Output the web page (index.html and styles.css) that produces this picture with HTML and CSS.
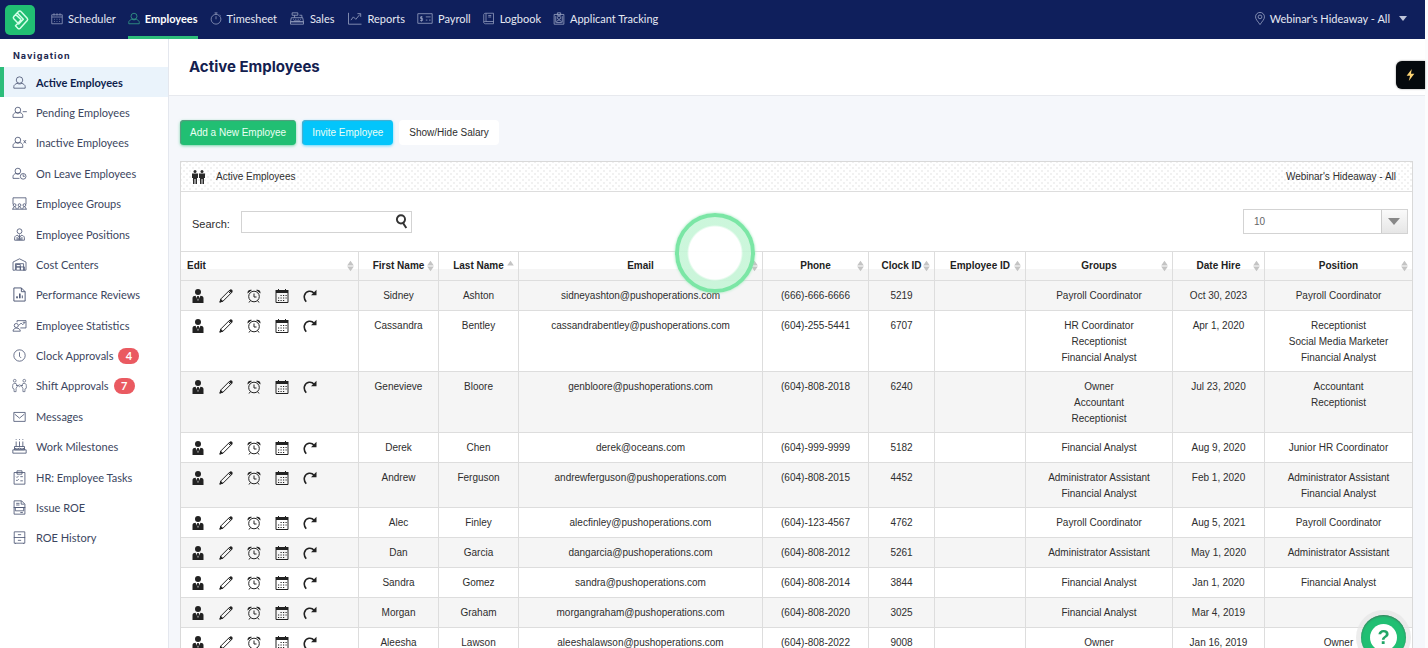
FILE: index.html
```html
<!DOCTYPE html>
<html lang="en">
<head>
    <meta charset="UTF-8">
    <meta name="viewport" content="width=device-width, initial-scale=1">
    <title>Active Employees</title>
    <link rel="stylesheet" href="styles.css">
</head>
<body>

<!-- icons -->
<svg class="sprite" aria-hidden="true">
    <symbol id="i-calendar" viewBox="0 0 16 16"><path d="M1 3h14v12H1zM1 6h14M4 1v3M8 1v3M12 1v3M4 9h1M7.500 9h1M11 9h1M4 12h1M7.500 12h1M11 12h1"/></symbol>
    <symbol id="i-user" viewBox="0 0 16 16"><circle cx="8" cy="5" r="4"/><path d="M5 9C3 10 1 11 1 13v2h14v-2c0-2-2-3-4-4M5 9c2 1 4 1 6 0"/></symbol>
    <symbol id="i-timer" viewBox="0 0 16 16"><circle cx="8" cy="9" r="6.500"/><path d="M6 .5h4M8 .5v2M8 5v4M13 3l1 1"/></symbol>
    <symbol id="i-sales" viewBox="0 0 18 16"><path d="M2 7h14l1 5H1zM1 12h16v3H1zM3 1h7v3H3zM6 4v3M12 4h3v3M4 9h1M7 9h1M10 9h1M13 9h1M5 11h8"/></symbol>
    <symbol id="i-chart" viewBox="0 0 18 16"><path d="M1 1v14h16M4 10l3-4 3 3 5-6M12 2h4v4"/></symbol>
    <symbol id="i-payroll" viewBox="0 0 20 16"><path d="M1 2h18v12H1zM11 6h6M11 10h2M15 10h2M7 6H4.500v2H7v2.500H4M5.500 5v7"/></symbol>
    <symbol id="i-book" viewBox="0 0 16 16"><path d="M3 1h11v14H3c-1 0-2-1-2-2V3c0-1 1-2 2-2zM4 1v11M14 12H3c-1 0-2 0-2 1M7 4h4M7 6h4"/></symbol>
    <symbol id="i-badge" viewBox="0 0 14 16"><path d="M1 3h12v12H1zM5 1h4v3H5zM4 13c0-4 6-4 6 0zM3 5v8M11 5v8"/><circle cx="7" cy="7" r="2"/></symbol>
    <symbol id="i-pin" viewBox="0 0 14 16"><path d="M7 15.500C4 11 1.500 9 1.500 6a5.500 5.500 0 0 1 11 0c0 3-2.500 5-5.500 9.500z"/><circle cx="7" cy="6" r="2.300"/></symbol>
    <symbol id="i-minus" viewBox="0 0 18 16"><circle cx="7" cy="5" r="3.500"/><path d="M4.500 8C2 9 1 10 1 12v2h12v-2c0-2-1-3-3.500-4M4.500 8c1.500 1 3.500 1 5 0M13 7h5"/></symbol>
    <symbol id="i-cross" viewBox="0 0 18 16"><circle cx="7" cy="5" r="3.500"/><path d="M4.500 8C2 9 1 10 1 12v2h12v-2c0-2-1-3-3.500-4M4.500 8c1.500 1 3.500 1 5 0M14 5l3 4M17 5l-3 4"/></symbol>
    <symbol id="i-leave" viewBox="0 0 18 16"><circle cx="7" cy="5" r="3.500"/><path d="M4.500 8C2 9 1 10 1 12v2h8M4.500 8c1.500 1 3.500 1 5 0M13.500 9v2.500h2"/><circle cx="13.500" cy="11.500" r="3.500"/></symbol>
    <symbol id="i-groups" viewBox="0 0 18 16"><path d="M1 9V1h16v8M1 15c0-4 4-4 4 0M7 15c0-4 4-4 4 0M13 15c0-4 4-4 4 0M0 15h18"/><circle cx="3" cy="10" r="1.700"/><circle cx="9" cy="10" r="1.700"/><circle cx="15" cy="10" r="1.700"/></symbol>
    <symbol id="i-position" viewBox="0 0 16 16"><circle cx="8" cy="4" r="3"/><path d="M2 15v-3c0-2 2-3 4-3l2 3 2-3c2 0 4 1 4 3v3zM8 8v7M5 11v4M11 11v4M6.500 12v3M9.500 12v3"/></symbol>
    <symbol id="i-cost" viewBox="0 0 18 16"><path d="M1 15V5l8-4 8 4v10h-3V7H4v8H1zM5 8h5v3H5zM5 11h5v4H5zM10 11h5v4h-5z"/></symbol>
    <symbol id="i-review" viewBox="0 0 14 16"><path d="M1 1h8l4 4v10H1zM9 1v4h4M4 12v-2M7 12V7M10 12V9M4.700 12v-2M7.700 12V7"/></symbol>
    <symbol id="i-stats" viewBox="0 0 18 16"><circle cx="5" cy="8" r="2.500"/><path d="M6 4V2h11v9h-7M1 15c0-5 9-5 9 0zM8 8l3-3 2 2 3-3M13 4h3"/></symbol>
    <symbol id="i-clock" viewBox="0 0 16 16"><circle cx="8" cy="8" r="7"/><path d="M8 4v5l2 2"/></symbol>
    <symbol id="i-shift" viewBox="0 0 22 20"><circle cx="4" cy="3" r="2"/><circle cx="18" cy="3" r="2"/><path d="M4 7c-2 0-3 1-3 3v4l2 1v4h3v-5l2-3-2-4zM18 7c2 0 3 1 3 3v4l-2 1v4h-3v-5l-2-3 2-4zM6 10h3M13 10h3M9 10l2-1 2 1-2 2z"/></symbol>
    <symbol id="i-mail" viewBox="0 0 16 16"><path d="M1 3h14v11H1zM2 5l6 5 6-5"/></symbol>
    <symbol id="i-cake" viewBox="0 0 18 18"><path d="M3 9h12v4H3zM1 13h16v4H1zM5 9V3M9 9V3M13 9V3M5 0v1M9 0v1M13 0v1M3 11l3 1 3-1 3 1 3-1"/></symbol>
    <symbol id="i-tasks" viewBox="0 0 16 18"><path d="M1.500 3h13v14h-13zM5 1h6v4H5zM4 8l1 1 2-2M9 8h3M4 12l1 1 2-2M9 13h3"/></symbol>
    <symbol id="i-roe" viewBox="0 0 16 18"><path d="M1.500 1h9l4 4v12h-13zM10 1v4h4M4 4h4M4 6h4M3 9h10v4H3zM1 9h14M9 15h3"/></symbol>
    <symbol id="i-history" viewBox="0 0 16 16"><path d="M1.500 1h13v14h-13zM1 8h14M6 4.500h4M6 11.500h4M3 15v1M13 15v1"/></symbol>

    <symbol id="i-profile" viewBox="0 0 14 14"><circle cx="7" cy="3" r="3"/><path d="M1.500 14V9c0-1.500 1.500-2 3-2.200L7 12l2.500-5.200c1.500.2 3 .7 3 2.200v5zM6.300 7h1.400l.6 2L7 11 5.700 9z"/></symbol>
    <symbol id="i-pencil" viewBox="0 0 14 14"><path class="thin" d="M1 13l1-3.200L10.500 1.300l2.200 2.200L4.200 12z"/><path class="thin" d="M9.500 2.500l2 2"/><path d="M.3 13.700l1.200-4 2.800 2.800zM10 1.800L11.300.5c1-.8 3 1.200 2.200 2.200L12.200 4z"/></symbol>
    <symbol id="i-alarm" viewBox="0 0 14 14"><circle class="thin" cx="7" cy="7.500" r="5.300"/><path class="thin" d="M7 4.500V8h2.500M3.500 11.500l-1.500 2M10.500 11.500l1.500 2"/><path d="M.6 4.500C0 2 2.500 0 5 1zM13.400 4.500C14 2 11.500 0 9 1z"/></symbol>
    <symbol id="i-grid" viewBox="0 0 14 14"><path d="M.5 1H3V0h1v1h6V0h1v1h2.500v3H.5z"/><path class="thin" d="M1 4v9.500h12V4M5.500 6.500h1.200M8 6.500h1.200M10.500 6.500h1.200M3 9h1.200M5.500 9h1.200M8 9h1.200M10.500 9h1.200M3 11.500h1.200M5.500 11.500h1.200M8 11.500h1.200"/></symbol>
    <symbol id="i-redo" viewBox="0 0 14 14"><path class="thick" d="M3.200 12.800C-.5 8.500 1.500 3 6 2.300c2-.3 3.800.4 5 1.900"/><path d="M8 6.200h5.500V.7z"/></symbol>
    <symbol id="i-sort" viewBox="0 0 8 12"><path d="M4 0l3.800 5.500H.2zM4 12L.2 6.500h7.600z"/></symbol>
    <symbol id="i-asc" viewBox="0 0 8 12"><path d="M4 0l3.800 5.500H.2z"/></symbol>
</svg>

<header class="topbar">
    <a class="logo" href="#" aria-label="Home">
        <svg viewBox="0 0 30 30"><path d="M13.500 6.500c.8-.8 1.700-.8 2.400 0l6.300 6.800c.7.800.7 1.500 0 2.300l-7 7.600c-.8.800-1.600.8-2.400 0l-2.300-2.500 5.700-6M16.200 14.700l-5.700-5.300M13.500 6.500l-4.700 5c-.7.800-.7 1.500 0 2.300l5 5.200 4.500-4.700-6-6.300"/></svg>
    </a>
    <nav class="topnav">
        <a href="#"><svg class="icon"><use href="#i-calendar"/></svg>Scheduler</a>
        <a href="#" class="current"><svg class="icon"><use href="#i-user"/></svg>Employees</a>
        <a href="#"><svg class="icon"><use href="#i-timer"/></svg>Timesheet</a>
        <a href="#"><svg class="icon wide"><use href="#i-sales"/></svg>Sales</a>
        <a href="#"><svg class="icon wide"><use href="#i-chart"/></svg>Reports</a>
        <a href="#"><svg class="icon wide"><use href="#i-payroll"/></svg>Payroll</a>
        <a href="#"><svg class="icon"><use href="#i-book"/></svg>Logbook</a>
        <a href="#"><svg class="icon"><use href="#i-badge"/></svg>Applicant Tracking</a>
    </nav>
    <button class="location" type="button"><svg class="icon"><use href="#i-pin"/></svg>Webinar's Hideaway - All<span class="caret"></span></button>
</header>

<div class="layout">
    <aside class="sidebar">
        <h2>Navigation</h2>
        <ul>
            <li class="active"><a href="#"><svg class="icon"><use href="#i-user"/></svg>Active Employees</a></li>
            <li><a href="#"><svg class="icon"><use href="#i-minus"/></svg>Pending Employees</a></li>
            <li><a href="#"><svg class="icon"><use href="#i-cross"/></svg>Inactive Employees</a></li>
            <li><a href="#"><svg class="icon"><use href="#i-leave"/></svg>On Leave Employees</a></li>
            <li><a href="#"><svg class="icon"><use href="#i-groups"/></svg>Employee Groups</a></li>
            <li><a href="#"><svg class="icon"><use href="#i-position"/></svg>Employee Positions</a></li>
            <li><a href="#"><svg class="icon"><use href="#i-cost"/></svg>Cost Centers</a></li>
            <li><a href="#"><svg class="icon big"><use href="#i-review"/></svg>Performance Reviews</a></li>
            <li><a href="#"><svg class="icon"><use href="#i-stats"/></svg>Employee Statistics</a></li>
            <li><a href="#"><svg class="icon"><use href="#i-clock"/></svg>Clock Approvals<span class="count">4</span></a></li>
            <li><a href="#"><svg class="icon big"><use href="#i-shift"/></svg>Shift Approvals<span class="count">7</span></a></li>
            <li><a href="#"><svg class="icon"><use href="#i-mail"/></svg>Messages</a></li>
            <li><a href="#"><svg class="icon big"><use href="#i-cake"/></svg>Work Milestones</a></li>
            <li><a href="#"><svg class="icon big"><use href="#i-tasks"/></svg>HR: Employee Tasks</a></li>
            <li><a href="#"><svg class="icon big"><use href="#i-roe"/></svg>Issue ROE</a></li>
            <li><a href="#"><svg class="icon"><use href="#i-history"/></svg>ROE History</a></li>
        </ul>
    </aside>

    <main class="content">
        <div class="pagehead">
            <h1>Active Employees</h1>
        </div>
        <div class="actions">
            <button type="button" class="btn add">Add a New Employee</button>
            <button type="button" class="btn invite">Invite Employee</button>
            <button type="button" class="btn">Show/Hide Salary</button>
        </div>
        <section class="panel">
            <div class="panelhead">
                <svg class="people" viewBox="0 0 14 14"><circle cx="3.500" cy="1.500" r="1.500"/><circle cx="10.500" cy="1.500" r="1.500"/><path d="M.5 3.500h6V8h-1v6H4V9H3v5H1.500V8h-1zM7.500 3.500h6V8h-1v6H11V9h-1v5H8.500V8h-1z"/></svg>
                <span>Active Employees</span>
                <span class="company">Webinar's Hideaway - All</span>
            </div>
            <div class="filters">
                <label for="search">Search:</label>
                <div class="searchbox">
                    <input type="text" id="search">
                    <svg viewBox="0 0 14 14"><circle cx="6.500" cy="5" r="3.800"/><path d="M8.500 8.500l3 4.500"/></svg>
                </div>
                <div class="pagesize">
                    <select aria-label="Rows per page">
                        <option>10</option>
                        <option>25</option>
                        <option>50</option>
                    </select>
                </div>
            </div>
            <table>
                <colgroup>
                    <col class="c-edit"><col class="c-name"><col class="c-name"><col><col class="c-phone">
                    <col class="c-clock"><col class="c-id"><col class="c-groups"><col class="c-date"><col class="c-groups">
                </colgroup>
                <thead>
                    <tr id="head"></tr>
                </thead>
                <tbody id="rows"></tbody>
            </table>
        </section>
    </main>
</div>

<div class="click"></div>
<button type="button" class="bolt" aria-label="Quick actions"><svg viewBox="0 0 10 14"><path d="M6.500 0L.5 8h4L3 14l6.500-8.500H5.500z"/></svg></button>
<button type="button" class="help" aria-label="Help"><span>?</span></button>

<script>
    var heads = ['Edit', 'First Name', 'Last Name', 'Email', 'Phone', 'Clock ID', 'Employee ID', 'Groups', 'Date Hire', 'Position'];
    var data = [
        ['Sidney', 'Ashton', 'sidneyashton', '(666)-666-6666', '5219', 'Payroll Coordinator', 'Oct 30, 2023', 'Payroll Coordinator'],
        ['Cassandra', 'Bentley', 'cassandrabentley', '(604)-255-5441', '6707', 'HR Coordinator<br>Receptionist<br>Financial Analyst', 'Apr 1, 2020', 'Receptionist<br>Social Media Marketer<br>Financial Analyst'],
        ['Genevieve', 'Bloore', 'genbloore', '(604)-808-2018', '6240', 'Owner<br>Accountant<br>Receptionist', 'Jul 23, 2020', 'Accountant<br>Receptionist'],
        ['Derek', 'Chen', 'derek@oceans.com', '(604)-999-9999', '5182', 'Financial Analyst', 'Aug 9, 2020', 'Junior HR Coordinator'],
        ['Andrew', 'Ferguson', 'andrewferguson', '(604)-808-2015', '4452', 'Administrator Assistant<br>Financial Analyst', 'Feb 1, 2020', 'Administrator Assistant<br>Financial Analyst'],
        ['Alec', 'Finley', 'alecfinley', '(604)-123-4567', '4762', 'Payroll Coordinator', 'Aug 5, 2021', 'Payroll Coordinator'],
        ['Dan', 'Garcia', 'dangarcia', '(604)-808-2012', '5261', 'Administrator Assistant', 'May 1, 2020', 'Administrator Assistant'],
        ['Sandra', 'Gomez', 'sandra', '(604)-808-2014', '3844', 'Financial Analyst', 'Jan 1, 2020', 'Financial Analyst'],
        ['Morgan', 'Graham', 'morgangraham', '(604)-808-2020', '3025', 'Financial Analyst', 'Mar 4, 2019', ''],
        ['Aleesha', 'Lawson', 'aleeshalawson', '(604)-808-2022', '9008', 'Owner', 'Jan 16, 2019', 'Owner']
    ];
    var tools = [['profile', 'Profile'], ['pencil', 'Edit'], ['alarm', 'Time clock'], ['grid', 'Schedule'], ['redo', 'Transfer']];

    document.querySelector('#head').innerHTML = heads.map(function (h) {
        var icon = h == 'Last Name' ? 'asc' : 'sort';
        return `<th><div>${h}<svg class="sort"><use href="#i-${icon}"/></svg></div></th>`;
    }).join('');

    var edit = tools.map(function (t) {
        return `<button type="button" aria-label="${t[1]}"><svg><use href="#i-${t[0]}"/></svg></button>`;
    }).join('');

    document.querySelector('#rows').innerHTML = data.map(function (v) {
        var mail = v[2].indexOf('@') > 0 ? v[2] : v[2] + '@pushoperations.com';
        return `<tr><td><div class="tools">${edit}</div></td><td>${v[0]}</td><td>${v[1]}</td><td>${mail}</td><td>${v[3]}</td><td>${v[4]}</td><td></td><td>${v[5]}</td><td>${v[6]}</td><td>${v[7]}</td></tr>`;
    }).join('');
</script>
</body>
</html>
```

FILE: styles.css
```css
* {
    box-sizing: border-box;
    margin: 0;
    padding: 0;
}

body {
    height: 100vh;
    display: flex;
    flex-direction: column;
    overflow: hidden;
    border-right: 3px solid #fcfcfd;
    background: #f5f7fb;
    font-family: "Liberation Sans", Arial, sans-serif;
    font-size: 10px;
    color: #2e2e2e;
}

a {
    color: inherit;
    text-decoration: none;
}

button,
input,
select {
    font: inherit;
    color: inherit;
    border: none;
    background: none;
}

button {
    cursor: pointer;
}

ul {
    list-style: none;
}

.sprite {
    position: absolute;
    width: 0;
    height: 0;
}

.icon {
    flex: none;
    width: 12px;
    height: 13px;
    fill: none;
    stroke: currentColor;
}

/* top bar */
.topbar {
    flex: none;
    height: 39px;
    display: flex;
    align-items: center;
    padding: 0 18px 0 5px;
    background: #0f1f5c;
    font-family: Lato, sans-serif;
    font-size: 11px;
    color: #e6e9f3;
}

.logo {
    width: 30px;
    height: 30px;
    margin-right: 16px;
    border-radius: 5px;
    background: #21bf73;
}

.logo svg {
    display: block;
    fill: none;
    stroke: #d5ffe8;
    stroke-width: 1.500;
    stroke-linejoin: round;
}

.topnav {
    align-self: stretch;
    display: flex;
    gap: 12px;
}

.topnav a {
    display: flex;
    align-items: center;
    gap: 5px;
    border-bottom: 3px solid transparent;
}

.topnav .icon,
.location .icon {
    color: #98a1c2;
}

.topnav .wide {
    width: 16px;
}

.topnav .current {
    font-weight: bold;
    color: #fff;
    border-bottom-color: #2dbd7a;
}

.topnav .current .icon {
    color: #37a88b;
}

.location {
    margin-left: auto;
    padding-bottom: 2px;
    display: flex;
    align-items: center;
    gap: 4px;
}

.caret {
    margin-left: 5px;
    border: 4px solid transparent;
    border-top: 5px solid #bfc5da;
    border-bottom: none;
}

.layout {
    flex: 1;
    min-height: 0;
    display: flex;
}

/* sidebar */
.sidebar {
    flex: none;
    width: 169px;
    background: #fff;
    border-right: 1px solid #e4e7ee;
    font-family: Lato, sans-serif;
    font-size: 11px;
    color: #3c4660;
}

.sidebar h2 {
    height: 28px;
    padding: 4px 0 0 13px;
    font-family: Inter, sans-serif;
    font-size: 9px;
    line-height: 26px;
    letter-spacing: 1px;
    color: #1d2850;
}

.sidebar ul {
    height: 486px;
    display: grid;
    grid-auto-rows: 1fr;
}

.sidebar a {
    height: 100%;
    display: flex;
    align-items: center;
    gap: 9px;
    padding-left: 12px;
}

.sidebar .icon {
    width: 15px;
    height: 13px;
    color: #4a5472;
}

.sidebar .big {
    height: 15px;
}

.sidebar .active {
    background: #eaf3fb;
    border-left: 4px solid #2dbd7a;
    font-weight: bold;
    color: #0f1f4d;
}

.sidebar .active a {
    padding-left: 8px;
}

.count {
    width: 21px;
    margin-left: -4px;
    border-radius: 8px;
    background: #ea5a61;
    color: #fff;
    font-weight: bold;
    line-height: 16px;
    text-align: center;
}

/* content */
.content {
    flex: 1;
    min-width: 0;
}

.pagehead {
    height: 57px;
    padding-left: 20px;
    background: #fff;
    border-bottom: 1px solid #e7e9ee;
}

.pagehead h1 {
    font-family: Inter, sans-serif;
    font-size: 15px;
    font-weight: 700;
    line-height: 56px;
    color: #13204f;
}

.actions {
    display: flex;
    gap: 6px;
    padding: 24px 11px 16px;
}

.btn {
    height: 25px;
    padding: 0 10px;
    border-radius: 4px;
    background: #fff;
}

.add,
.invite {
    color: #eafff4;
    background: #21bf73;
    box-shadow: 0 1px 3px #21bf7399, inset 1px 1px 1px #5a9c80;
}

.invite {
    background: #03c5fb;
    box-shadow: 0 1px 3px #03c5fb99, inset 1px 1px 1px #4faccc;
}

.panel {
    margin: 0 12px 0 11px;
    border: 1px solid #d9d9d9;
    background: #fff;
}

.panelhead {
    height: 30px;
    display: flex;
    align-items: center;
    gap: 10px;
    padding: 0 16px 0 10px;
    border-bottom: 1px solid #ddd;
    background: radial-gradient(#f1f1f1 1px, transparent 1px) 0 0 / 6px 6px, radial-gradient(#f1f1f1 1px, transparent 1px) 3px 3px / 6px 6px;
}

.people {
    width: 15px;
    height: 14px;
    fill: #2b2b2b;
}

.company {
    margin-left: auto;
}

.filters {
    height: 59px;
    display: flex;
    align-items: center;
    gap: 11px;
    padding: 0 4px 0 11px;
}

.filters label {
    padding-top: 4px;
    font-size: 11px;
}

.searchbox {
    width: 171px;
    height: 22px;
    display: flex;
    align-items: center;
    border: 1px solid #d3d3d3;
}

.searchbox input {
    flex: 1;
    min-width: 0;
    height: 100%;
    padding: 0 6px;
    outline: none;
}

.searchbox svg {
    width: 15px;
    height: 15px;
    margin-right: 2px;
    fill: none;
    stroke: #333;
    stroke-width: 1.800;
}

.pagesize {
    position: relative;
    width: 165px;
    height: 25px;
    margin-left: auto;
    border: 1px solid #d3d3d3;
    background: linear-gradient(#fafafa, #e6e6e6);
}

.pagesize select {
    width: 100%;
    height: 100%;
    padding-left: 10px;
    appearance: none;
    color: #666;
    background: linear-gradient(#fff, #fff) no-repeat;
    background-size: calc(100% - 26px) 100%;
}

.pagesize::before {
    content: "";
    position: absolute;
    right: 25px;
    height: 100%;
    border-left: 1px solid #ccc;
}

.pagesize::after {
    content: "";
    position: absolute;
    right: 7px;
    top: 8px;
    border: 6px solid transparent;
    border-top: 7px solid #888;
    border-bottom: none;
    pointer-events: none;
}

/* employees table */
table {
    width: 100%;
    table-layout: fixed;
    border-collapse: separate;
    border-spacing: 0;
    border-top: 1px solid #ddd;
}

.c-edit { width: 178px; }
.c-name { width: 80px; }
.c-phone { width: 106px; }
.c-clock { width: 66px; }
.c-id { width: 91px; }
.c-groups { width: 147px; }
.c-date { width: 92px; }

th,
td {
    border-right: 1px solid #ddd;
    border-bottom: 1px solid #ddd;
    text-align: center;
    vertical-align: top;
}

th:last-child,
td:last-child {
    border-right: none;
}

th {
    height: 29px;
    background: linear-gradient(#fff 60%, #f5f5f5 60%);
    color: #222;
}

th div {
    position: relative;
    line-height: 27px;
    white-space: nowrap;
}

th:first-child {
    padding-left: 6px;
    text-align: left;
}

.sort {
    position: absolute;
    right: 4px;
    top: 8px;
    width: 7px;
    height: 12px;
    fill: #c4c4c4;
}

td {
    height: 30px;
    padding: 7px 4px 5px;
    line-height: 16px;
}

tbody tr:nth-child(odd) {
    background: #f5f5f5;
}

.tools {
    display: flex;
    gap: 14px;
    padding: 1px 6px 0;
}

.tools button,
.tools svg {
    display: block;
    width: 14px;
    height: 14px;
    fill: #222;
}

.thin,
.thick {
    fill: none;
    stroke: #222;
}

.thick {
    stroke-width: 1.600;
}

/* click highlight */
.click {
    position: absolute;
    left: 675px;
    top: 213px;
    width: 80px;
    height: 80px;
    border: 4px solid #7be6a5;
    border-radius: 50%;
    background: radial-gradient(#ffffffe6 26px, #c4f5d6dd 28px);
    box-shadow: 0 0 3px #9fe8bb;
    pointer-events: none;
}

.bolt {
    position: fixed;
    right: 3px;
    top: 61px;
    width: 29px;
    height: 28px;
    border-radius: 6px 0 0 6px;
    background: #05090d;
    box-shadow: 0 0 2px #888;
}

.bolt svg {
    width: 9px;
    height: 12px;
    vertical-align: middle;
    fill: #fcd374;
}

.help {
    position: fixed;
    right: 22px;
    bottom: -12px;
    width: 45px;
    height: 45px;
    border-radius: 50%;
    background: #21bf73;
    box-shadow: 0 0 0 5px #e6e6e6b3, inset 0 1px 2px #3d7a5d;
}

.help span {
    display: block;
    width: 27px;
    height: 27px;
    margin: 0 auto;
    border-radius: 50%;
    background: #fff;
    color: #21a567;
    font-size: 20px;
    font-weight: bold;
    line-height: 26px;
}
```
